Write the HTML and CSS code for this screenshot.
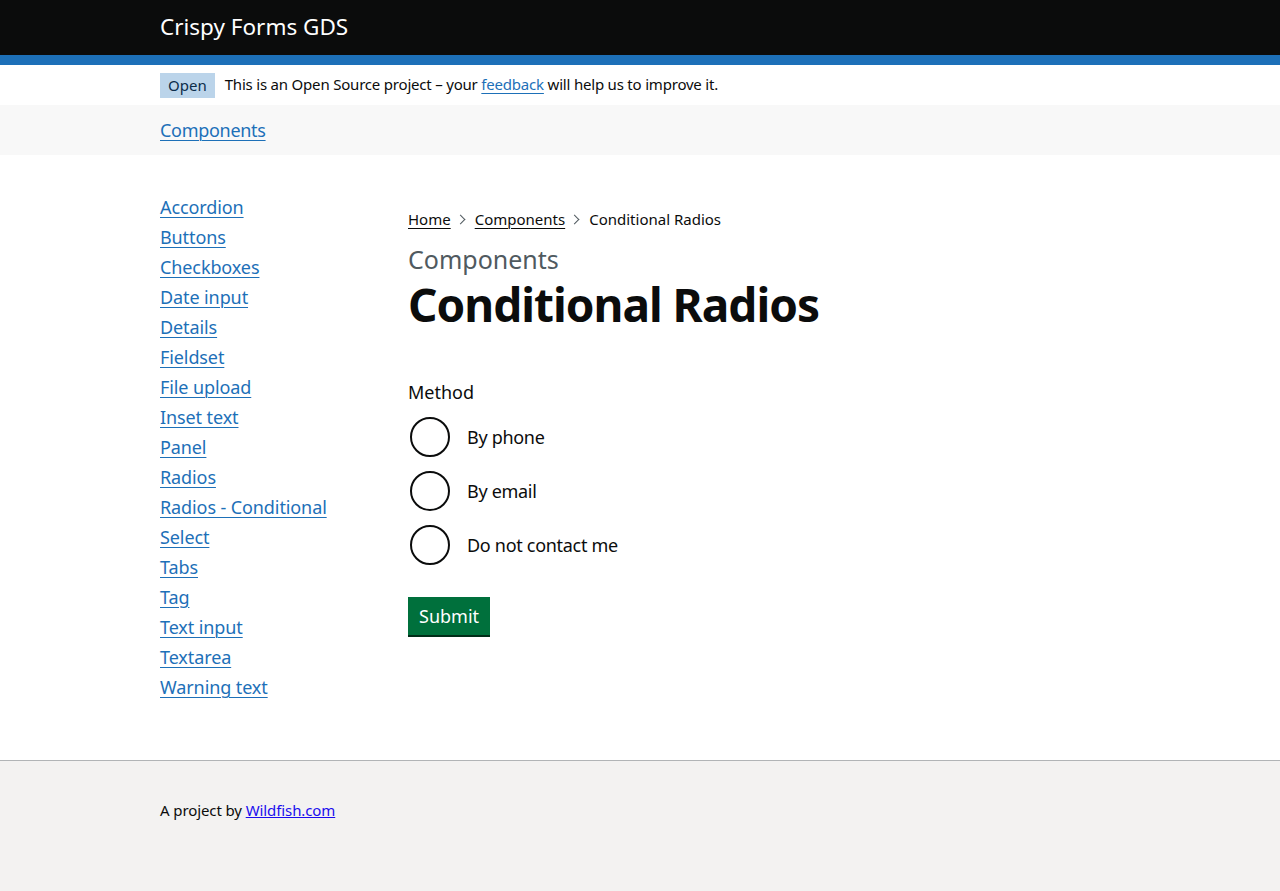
FILE: index.html
```html
<!DOCTYPE html>
<html lang="en">
<head>
<meta charset="utf-8">
<title>Conditional Radios - Crispy Forms GDS</title>
<link rel="stylesheet" href="styles.css">
</head>
<body>
<header class="header">
  <div class="container header-inner">
    <a class="header-title" href="#">Crispy Forms GDS</a>
  </div>
</header>
<div class="container phase">
  <strong class="tag">Open</strong>
  <span class="phase-text">This is an Open Source project – your <a href="#" class="link">feedback</a> will help us to improve it.</span>
</div>
<nav class="topnav">
  <div class="container">
    <a href="#" class="link nav-link">Components</a>
  </div>
</nav>
<div class="container main">
  <aside class="sidebar">
    <ul class="side-list">
      <li><a href="#" class="link">Accordion</a></li>
      <li><a href="#" class="link">Buttons</a></li>
      <li><a href="#" class="link">Checkboxes</a></li>
      <li><a href="#" class="link">Date input</a></li>
      <li><a href="#" class="link">Details</a></li>
      <li><a href="#" class="link">Fieldset</a></li>
      <li><a href="#" class="link">File upload</a></li>
      <li><a href="#" class="link">Inset text</a></li>
      <li><a href="#" class="link">Panel</a></li>
      <li><a href="#" class="link">Radios</a></li>
      <li><a href="#" class="link">Radios - Conditional</a></li>
      <li><a href="#" class="link">Select</a></li>
      <li><a href="#" class="link">Tabs</a></li>
      <li><a href="#" class="link">Tag</a></li>
      <li><a href="#" class="link">Text input</a></li>
      <li><a href="#" class="link">Textarea</a></li>
      <li><a href="#" class="link">Warning text</a></li>
    </ul>
  </aside>
  <main class="content">
    <ol class="breadcrumbs">
      <li><a href="#" class="crumb-link">Home</a></li>
      <li class="chev"><a href="#" class="crumb-link">Components</a></li>
      <li class="chev">Conditional Radios</li>
    </ol>
    <span class="caption">Components</span>
    <h1 class="title">Conditional Radios</h1>
    <form class="form">
      <fieldset class="fieldset">
        <legend class="legend">Method</legend>
        <div class="radios">
          <label class="radio"><input type="radio" name="method" class="radio-input"><span class="radio-label">By phone</span></label>
          <label class="radio"><input type="radio" name="method" class="radio-input"><span class="radio-label">By email</span></label>
          <label class="radio"><input type="radio" name="method" class="radio-input"><span class="radio-label">Do not contact me</span></label>
        </div>
      </fieldset>
      <button type="button" class="button">Submit</button>
    </form>
  </main>
</div>
<footer class="footer">
  <div class="container">
    A project by <a href="#" class="footer-link">Wildfish.com</a>
  </div>
</footer>
</body>
</html>
```
FILE: styles.css
```css
* { box-sizing: border-box; }
html, body { margin: 0; padding: 0; }
body {
  font-family: "Noto Sans", "Liberation Sans", Arial, sans-serif;
  color: #0b0c0c;
  background: #fff;
}
.container {
  width: 960px;
  margin: 0 auto;
}
.link {
  color: #1d70b8;
  text-decoration: underline;
  text-decoration-thickness: 1px;
  text-underline-offset: 3px;
}
.header {
  background: #0b0c0c;
  border-bottom: 10px solid #1d70b8;
  height: 65px;
}
.header-inner {
  height: 55px;
  display: flex;
  align-items: center;
}
.header-title {
  color: #fff;
  text-decoration: none;
  font-size: 22.5px;
  line-height: 30px;
  margin-top: -2px;
}
.phase {
  height: 40px;
  display: flex;
  align-items: center;
  font-size: 15px;
  letter-spacing: -0.2px;
}
.tag {
  background: #bbd4ea;
  color: #0c2d4a;
  font-weight: normal;
  font-size: 15px;
  line-height: 25px;
  height: 25px;
  padding: 0 8px;
  margin-right: 10px;
  letter-spacing: 0;
}
.phase-text {
  line-height: 20px;
  margin-top: -2px;
}
.topnav {
  background: #f8f8f8;
  height: 50px;
  display: flex;
  align-items: center;
}
.nav-link {
  font-size: 18px;
  line-height: 25px;
  letter-spacing: -0.3px;
}
.main {
  display: flex;
  padding: 40px 0 55px;
}
.sidebar {
  width: 248px;
  flex: none;
}
.side-list {
  list-style: none;
  margin: 0;
  padding: 0;
}
.side-list li {
  font-size: 18px;
  line-height: 25px;
  margin-bottom: 5px;
  letter-spacing: -0.1px;
}
.content {
  flex: 1;
}
.breadcrumbs {
  list-style: none;
  margin: 14px 0 15px;
  padding: 0;
  display: flex;
  font-size: 15px;
  line-height: 20px;
}
.breadcrumbs li {
  display: flex;
  align-items: center;
}
.chev::before {
  content: "";
  display: block;
  width: 6px;
  height: 6px;
  border-top: 1px solid #505a5f;
  border-right: 1px solid #505a5f;
  transform: rotate(45deg);
  margin: 0 11px 0 6px;
}
.crumb-link {
  color: #0b0c0c;
  text-decoration: underline;
  text-decoration-thickness: 1px;
  text-underline-offset: 3px;
}
.caption {
  display: block;
  color: #505a5f;
  font-size: 25px;
  line-height: 30px;
  margin-bottom: 5px;
}
.title {
  margin: 0 0 51px;
  font-size: 46px;
  line-height: 50px;
  font-weight: 700;
  letter-spacing: -1px;
}
.fieldset {
  border: 0;
  margin: 0 0 30px;
  padding: 0;
}
.legend {
  padding: 0;
  font-size: 18px;
  line-height: 25px;
  margin-bottom: 10px;
}
.radios {
  display: flex;
  flex-direction: column;
  gap: 10px;
}
.radio {
  display: flex;
  align-items: center;
  height: 44px;
}
.radio-input {
  appearance: none;
  -webkit-appearance: none;
  width: 40px;
  height: 40px;
  margin: 0 0 0 2px;
  border: 2px solid #0b0c0c;
  border-radius: 50%;
  background: #fff;
  flex: none;
}
.radio-label {
  font-size: 18px;
  line-height: 25px;
  padding-left: 17px;
  letter-spacing: -0.3px;
}
.button {
  font-family: inherit;
  font-size: 18px;
  line-height: 23px;
  color: #fff;
  background: #00703c;
  border: 0;
  border-radius: 0;
  padding: 8px 11px 7px;
  box-shadow: 0 2px 0 #002d18;
  margin: 0;
}
.footer {
  background: #f3f2f1;
  border-top: 1px solid #b1b4b6;
  height: 131px;
  padding-top: 39px;
  font-size: 15px;
  line-height: 20px;
  letter-spacing: -0.1px;
}
.footer-link {
  color: #1a0dee;
  text-decoration: underline;
}
```
